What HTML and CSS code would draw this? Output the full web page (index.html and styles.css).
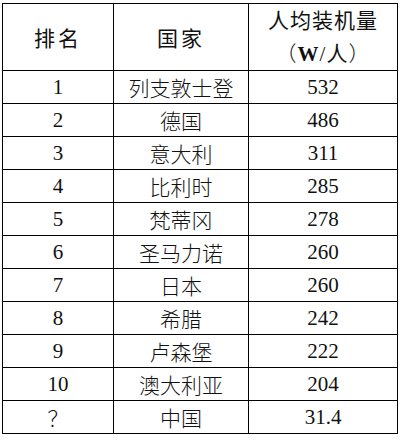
FILE: index.html
```html
<!DOCTYPE html>
<html lang="zh">
<head>
<meta charset="utf-8">
<link rel="stylesheet" href="styles.css">
</head>
<body>
<table class="rank">
  <thead>
    <tr>
      <th class="c1">排名</th>
      <th class="c2">国家</th>
      <th class="c3"><span class="l1">人均装机量</span><span class="l2"><span class="cjk">（</span><b class="w">W</b>/人<span class="cjk">）</span></span></th>
    </tr>
  </thead>
  <tbody>
    <tr><td>1</td><td>列支敦士登</td><td>532</td></tr>
    <tr><td>2</td><td>德国</td><td>486</td></tr>
    <tr><td>3</td><td>意大利</td><td>311</td></tr>
    <tr><td>4</td><td>比利时</td><td>285</td></tr>
    <tr><td>5</td><td>梵蒂冈</td><td>278</td></tr>
    <tr><td>6</td><td>圣马力诺</td><td>260</td></tr>
    <tr><td>7</td><td>日本</td><td>260</td></tr>
    <tr><td>8</td><td>希腊</td><td>242</td></tr>
    <tr><td>9</td><td>卢森堡</td><td>222</td></tr>
    <tr><td>10</td><td>澳大利亚</td><td>204</td></tr>
    <tr><td>？</td><td>中国</td><td>31.4</td></tr>
  </tbody>
</table>
</body>
</html>
```
FILE: styles.css
```css
html, body {
  margin: 0;
  padding: 0;
  background: #ffffff;
}
body {
  padding: 3px 0 0 2px;
  font-family: "Liberation Serif", "Noto Sans CJK SC", serif;
  color: #111;
}
.rank {
  border-collapse: collapse;
  width: 395px;
  table-layout: fixed;
  font-size: 21px;
}
.rank th, .rank td {
  border: 1.5px solid #000;
  text-align: center;
  padding: 0;
  font-weight: 300;
}
.rank th {
  height: 64px;
  font-weight: 400;
}
.rank td {
  height: 32px;
}
.c1 { width: 110px; }
.c2 { width: 134px; }
.c3 { width: 148px; }
.c1, .c2 { letter-spacing: 3px; }
.l1, .l2 {
  display: block;
  line-height: 31px;
}
.l1 { letter-spacing: 1px; margin-top: 2px; }
.l2 { letter-spacing: 1px; }
.cjk { font-family: "Noto Sans CJK SC", sans-serif; font-weight: 300; }
.w { font-weight: bold; }
```
